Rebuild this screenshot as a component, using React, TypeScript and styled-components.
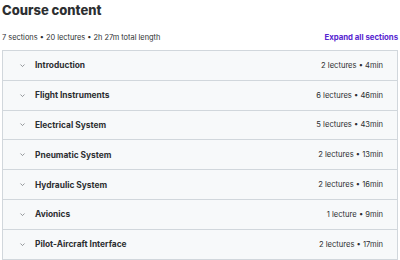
import React from "react";
import styled, { createGlobalStyle } from "styled-components";

const GlobalStyle = createGlobalStyle`
  html, body {
    margin: 0;
    padding: 0;
    background: #ffffff;
    font-family: Inter, "Noto Sans", "Liberation Sans", sans-serif;
    color: #2d2f31;
  }
`;

interface Section {
  title: string;
  lectures: number;
  minutes: number;
}

const sections: Section[] = [
  { title: "Introduction", lectures: 2, minutes: 4 },
  { title: "Flight Instruments", lectures: 6, minutes: 46 },
  { title: "Electrical System", lectures: 5, minutes: 43 },
  { title: "Pneumatic System", lectures: 2, minutes: 13 },
  { title: "Hydraulic System", lectures: 2, minutes: 16 },
  { title: "Avionics", lectures: 1, minutes: 9 },
  { title: "Pilot-Aircraft Interface", lectures: 2, minutes: 17 },
];

const Page = styled.div`
  width: 396px;
  padding: 0 3px 0 2px;
`;

const Title = styled.h2`
  margin: 0;
  padding-top: 1px;
  font-size: 13px;
  line-height: 18px;
  font-weight: 800;
  color: #2d2f31;
`;

const MetaBar = styled.div`
  display: flex;
  align-items: center;
  justify-content: space-between;
  margin-top: 11px;
  height: 14px;
  margin-bottom: 6px;
`;

const Meta = styled.span`
  font-size: 7.4px;
  color: #2d2f31;
`;

const ExpandLink = styled.button`
  border: none;
  background: none;
  padding: 0;
  font-family: inherit;
  font-size: 7.8px;
  font-weight: 700;
  color: #5624d0;
  cursor: pointer;
`;

const List = styled.div`
  border: 1px solid #d1d7dc;
  display: flex;
  flex-direction: column;
`;

const Row = styled.div<{ $last?: boolean }>`
  display: flex;
  align-items: center;
  height: 28.8px;
  padding: 0 14px 0 16px;
  background: #f7f9fa;
  border-bottom: ${(p) => (p.$last ? "none" : "1px solid #d1d7dc")};
`;

const Chevron = styled.svg`
  width: 7px;
  height: 7px;
  margin-right: 9px;
  flex-shrink: 0;
`;

const SectionTitle = styled.span`
  flex: 1;
  font-size: 8.4px;
  font-weight: 700;
  color: #2d2f31;
`;

const SectionMeta = styled.span`
  font-size: 7.6px;
  color: #2d2f31;
`;

export default function App() {
  return (
    <>
      <GlobalStyle />
      <Page>
        <Title>Course content</Title>
        <MetaBar>
          <Meta>7 sections • 20 lectures • 2h 27m total length</Meta>
          <ExpandLink>Expand all sections</ExpandLink>
        </MetaBar>
        <List>
          {sections.map((s, i) => (
            <Row key={s.title} $last={i === sections.length - 1}>
              <Chevron viewBox="0 0 10 10">
                <path
                  d="M2.5 4 L5 6.5 L7.5 4"
                  fill="none"
                  stroke="#6a6f73"
                  strokeWidth="1"
                  strokeLinecap="round"
                  strokeLinejoin="round"
                />
              </Chevron>
              <SectionTitle>{s.title}</SectionTitle>
              <SectionMeta>
                {s.lectures} {s.lectures === 1 ? "lecture" : "lectures"} • {s.minutes}min
              </SectionMeta>
            </Row>
          ))}
        </List>
      </Page>
    </>
  );
}
